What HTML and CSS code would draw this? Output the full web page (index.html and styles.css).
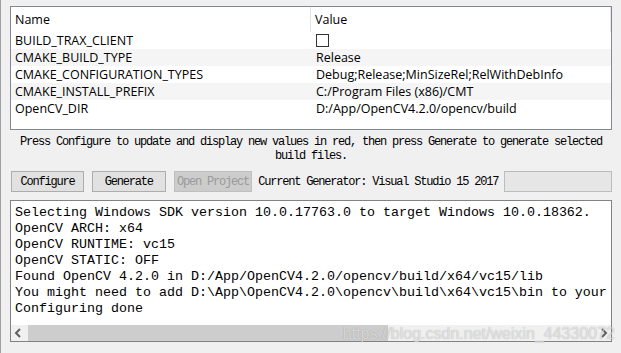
FILE: index.html
```html
<!DOCTYPE html>
<html lang="en">
<head>
    <meta charset="UTF-8">
    <title>CMake</title>
    <link rel="stylesheet" href="styles.css">
</head>
<body>
    <div class="window">
        <div class="cache">
            <div class="cache-head">
                <div class="col-name">Name</div>
                <div class="col-value">Value</div>
            </div>
            <div class="cache-row">
                <div class="col-name">BUILD_TRAX_CLIENT</div>
                <div class="col-value"><span class="check"></span></div>
            </div>
            <div class="cache-row">
                <div class="col-name">CMAKE_BUILD_TYPE</div>
                <div class="col-value">Release</div>
            </div>
            <div class="cache-row">
                <div class="col-name">CMAKE_CONFIGURATION_TYPES</div>
                <div class="col-value">Debug;Release;MinSizeRel;RelWithDebInfo</div>
            </div>
            <div class="cache-row">
                <div class="col-name">CMAKE_INSTALL_PREFIX</div>
                <div class="col-value">C:/Program Files (x86)/CMT</div>
            </div>
            <div class="cache-row">
                <div class="col-name">OpenCV_DIR</div>
                <div class="col-value">D:/App/OpenCV4.2.0/opencv/build</div>
            </div>
        </div>

        <p class="hint">Press Configure to update and display new values in red, then press Generate to generate selected<br>build files.</p>

        <div class="toolbar">
            <button class="btn btn-configure">Configure</button>
            <button class="btn btn-generate">Generate</button>
            <button class="btn btn-open" disabled>Open Project</button>
            <span class="generator">Current Generator: Visual Studio 15 2017</span>
            <div class="progress"></div>
        </div>

        <div class="output">
            <pre class="log">Selecting Windows SDK version 10.0.17763.0 to target Windows 10.0.18362.
OpenCV ARCH: x64
OpenCV RUNTIME: vc15
OpenCV STATIC: OFF
Found OpenCV 4.2.0 in D:/App/OpenCV4.2.0/opencv/build/x64/vc15/lib
You might need to add D:\App\OpenCV4.2.0\opencv\build\x64\vc15\bin to your
Configuring done</pre>
            <div class="hscroll">
                <svg class="arrow" width="16" height="16" viewBox="0 0 16 16"><polyline points="9,4 5,8 9,12" fill="none" stroke="#606060" stroke-width="2"/></svg>
                <div class="track"><div class="thumb"></div></div>
                <svg class="arrow" width="16" height="16" viewBox="0 0 16 16"><polyline points="7,4 11,8 7,12" fill="none" stroke="#606060" stroke-width="2"/></svg>
            </div>
            <span class="watermark">https://blog.csdn.net/weixin_44330072</span>
        </div>
    </div>
</body>
</html>
```

FILE: styles.css
```css
body {
    margin: 0;
    background: #f0f0f0;
    font-family: 'Open Sans', 'Noto Sans', sans-serif;
    font-size: 12.5px;
    color: #000;
}
.window {
    height: 353px;
    box-sizing: border-box;
    border-left: 1px solid #a0a0a0;
    padding: 6px 9px 0 9px;
    overflow: hidden;
}

/* cache table */
.cache {
    width: 602px;
    height: 124px;
    box-sizing: border-box;
    border: 1px solid #828790;
    background: #fff;
}
.cache-head,
.cache-row {
    display: flex;
}
.cache-head {
    height: 25px;
    line-height: 25px;
}
.cache-row {
    height: 17px;
    line-height: 17px;
}
.cache-row:nth-child(odd) {
    background: #f5f5f5;
}
.col-name,
.col-value {
    width: 300px;
    box-sizing: border-box;
    padding-left: 4px;
    white-space: nowrap;
}
.cache-head .col-name,
.cache-head .col-value {
    border-right: 1px solid #e5e5e5;
}
.cache-row .col-value {
    padding-left: 5px;
}
.check {
    display: inline-block;
    width: 11px;
    height: 11px;
    border: 1px solid #333;
    background: #fff;
    vertical-align: middle;
    margin-top: -2px;
}

/* hint */
.hint {
    margin: 5px 0 0 0;
    text-align: center;
    font-family: 'Liberation Mono', monospace;
    font-size: 12px;
    letter-spacing: -1.2px;
    line-height: 14px;
}

/* toolbar */
.toolbar {
    display: flex;
    align-items: center;
    margin-top: 8px;
    padding-left: 1px;
    height: 21px;
}
.btn {
    height: 21px;
    box-sizing: border-box;
    margin: 0 8px 0 0;
    padding: 0;
    background: #e1e1e1;
    border: 1px solid #adadad;
    font-family: 'Liberation Mono', monospace;
    font-size: 12px;
    letter-spacing: -1.2px;
    color: #000;
}
.btn-configure { width: 73px; margin-right: 8px; }
.btn-generate { width: 74px; }
.btn-open {
    width: 79px;
    margin-right: 6px;
    background: #cccccc;
    border-color: #bfbfbf;
    color: #9a9a9a;
}
.generator {
    font-family: 'Liberation Mono', monospace;
    font-size: 12px;
    letter-spacing: -1.2px;
    white-space: nowrap;
    width: 240px;
}
.progress {
    width: 108px;
    height: 21px;
    box-sizing: border-box;
    margin-left: 6px;
    background: #e6e6e6;
    border: 1px solid #bcbcbc;
}

/* output */
.output {
    position: relative;
    margin-top: 8px;
    width: 602px;
    height: 142px;
    box-sizing: border-box;
    border: 1px solid #828282;
    background: #fff;
    display: flex;
    flex-direction: column;
}
.log {
    flex: 1;
    margin: 0;
    padding: 4px 0 0 4px;
    overflow: hidden;
    font-family: 'Liberation Mono', monospace;
    font-size: 13.333px;
    line-height: 16px;
    white-space: pre;
}
.hscroll {
    display: flex;
    height: 16px;
    background: #f0f0f0;
}
.track {
    flex: 1;
    padding: 0 1px;
}
.thumb {
    width: 360px;
    height: 16px;
    background: #cdcdcd;
}
.watermark {
    position: absolute;
    right: -4px;
    bottom: -2px;
    font-family: 'Liberation Sans', Arial, sans-serif;
    font-size: 16px;
    color: rgba(255, 255, 255, 0.65);
    text-shadow: 0 0 1px rgba(0, 0, 0, 0.35);
    white-space: nowrap;
}
```
